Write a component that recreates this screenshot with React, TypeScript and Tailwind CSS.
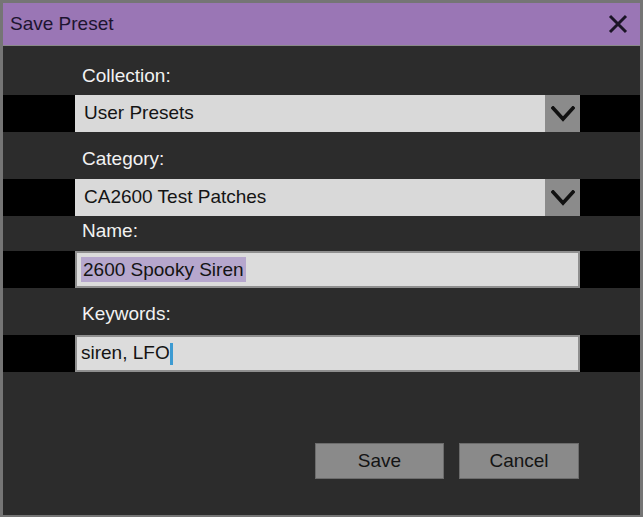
import { useState } from "react"

const font = { fontFamily: '"Liberation Sans", Arial, sans-serif' }

function Chevron() {
  return (
    <svg width="24" height="16" viewBox="0 0 24 16" fill="none">
      <path d="M2 2 L12 13 L22 2" stroke="#111" strokeWidth="3.6" strokeLinecap="square" strokeLinejoin="miter" />
    </svg>
  )
}

function SelectRow({ value }: { value: string }) {
  return (
    <div className="flex h-[37px] bg-black">
      <div className="ml-[72px] flex w-[505px]">
        <div className="flex flex-1 items-center bg-[#d9d9d9] pl-[9px] text-[19px] text-[#141414]">{value}</div>
        <div className="flex w-[35px] items-center justify-center bg-[#8b8b8b]">
          <Chevron />
        </div>
      </div>
    </div>
  )
}

function Label({ children, className }: { children: string; className: string }) {
  return <div className={`pl-[79px] text-[19px] leading-[22px] text-[#f2f2f2] ${className}`}>{children}</div>
}

export default function App() {
  const [name] = useState("2600 Spooky Siren")
  const [keywords] = useState("siren, LFO")

  return (
    <div style={font} className="h-[517px] w-[643px] bg-[#757575] px-[3px] pb-[2px] pt-[3px]">
      <div className="flex h-full flex-col bg-[#2c2c2c]">
        {/* title bar */}
        <div className="flex h-[43px] items-center justify-between border-b-[1px] border-[#8a8a8a] bg-[#9a76b5] pl-[7px] pr-[12px]">
          <span className="text-[19px] text-[#1d1430]">Save Preset</span>
          <svg width="20" height="20" viewBox="0 0 20 20">
            <path d="M2 2 L18 18 M18 2 L2 18" stroke="#1b1426" strokeWidth="3" />
          </svg>
        </div>

        <Label className="mt-[19px]">Collection:</Label>
        <div className="mt-[8px]">
          <SelectRow value="User Presets" />
        </div>

        <Label className="mt-[16px]">Category:</Label>
        <div className="mt-[9px]">
          <SelectRow value="CA2600 Test Patches" />
        </div>

        <Label className="mt-[4px]">Name:</Label>
        <div className="mt-[9px] flex h-[37px] bg-black">
          <div className="ml-[72px] flex w-[505px] items-center border-2 border-[#8f8f8f] bg-[#dcdcdc] pl-[4px] text-[19px] text-[#141414]">
            <span className="bg-[#b6a7cd] px-[2px] leading-[25px]">{name}</span>
          </div>
        </div>

        <Label className="mt-[15px]">Keywords:</Label>
        <div className="mt-[10px] flex h-[37px] bg-black">
          <div className="ml-[72px] flex w-[505px] items-center border-2 border-[#8f8f8f] bg-[#dcdcdc] pl-[4px] text-[19px] text-[#141414]">
            <span>{keywords}</span>
            <span className="h-[22px] w-[3px] bg-[#3d9bd2]" />
          </div>
        </div>

        <div className="mt-[71px] flex justify-end gap-[15px] pr-[61px]">
          <button className="h-[36px] w-[129px] border border-[#6c6c6c] bg-[#8a8a8a] text-[19px] text-[#141414]">Save</button>
          <button className="h-[36px] w-[120px] border border-[#6c6c6c] bg-[#8a8a8a] text-[19px] text-[#141414]">Cancel</button>
        </div>
      </div>
    </div>
  )
}
